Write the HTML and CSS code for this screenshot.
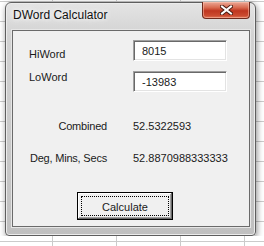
FILE: index.html
```html
<!DOCTYPE html>
<html lang="en">
<head>
  <meta charset="UTF-8">
  <meta name="viewport" content="width=device-width, initial-scale=1.0">
  <title>DWord Calculator</title>
  <link rel="stylesheet" href="styles.css">
</head>
<body>
  <div class="window">
    <div class="titlebar">
      <span class="title">DWord Calculator</span>
      <div class="close">
        <svg width="13" height="10" viewBox="0 0 13 10">
          <path d="M2 1.5 L11 8.5 M11 1.5 L2 8.5" stroke="#4b1c12" stroke-width="4" stroke-linecap="square" fill="none"/>
          <path d="M2 1.5 L11 8.5 M11 1.5 L2 8.5" stroke="#ffffff" stroke-width="2" stroke-linecap="square" fill="none"/>
        </svg>
      </div>
    </div>

    <div class="client">
      <div class="fields">
        <label class="label label-hi" for="hiword">HiWord</label>
        <input class="textbox" type="text" id="hiword" value="8015">
        <label class="label label-lo" for="loword">LoWord</label>
        <input class="textbox" type="text" id="loword" value="-13983">
      </div>

      <div class="results">
        <span class="result-label">Combined</span>
        <span class="result-value" id="combined">52.5322593</span>
        <span class="result-label">Deg, Mins, Secs</span>
        <span class="result-value" id="dms">52.8870988333333</span>
      </div>

      <button class="calc-button"><span class="focus">Calculate</span></button>
    </div>
  </div>
</body>
</html>
```

FILE: styles.css
```css
/* 기본 설정 */
:root {
  --client-bg: #f0f0f0;
  --text-color: #1a1a1a;
  --grid-line: #cbcbcb;
}

html {
  background-color: #fff;
  background-image:
    linear-gradient(to right, var(--grid-line) 1px, transparent 1px),
    linear-gradient(to bottom, var(--grid-line) 1px, transparent 1px);
  background-size: 64px 20px;
  background-position: 52px 1px;
}

body {
  margin: 0;
  padding: 2px 0 0 5px;
  font-family: "Liberation Sans", Arial, sans-serif;
  font-size: 11px;
  color: var(--text-color);
}

/* 창 프레임 */
.window {
  box-sizing: border-box;
  width: 251px;
  height: 234px;
  border: 1px solid #5e5e5e;
  border-radius: 6px 6px 4px 4px;
  background: linear-gradient(#e4e4e4, #d3d3d3 14%, #c9c9c9 60%, #c0c0c0);
  box-shadow: inset 0 0 0 1px #ececec, 1px 2px 6px rgba(0, 0, 0, 0.45);
  display: flex;
  flex-direction: column;
}

.titlebar {
  height: 27px;
  display: flex;
  justify-content: space-between;
  align-items: flex-start;
  padding: 0 5px 0 7px;
}

.title {
  font-size: 12px;
  line-height: 24px;
  color: #111;
  text-shadow: 0 0 8px #fff, 0 0 4px #fff;
}

/* 닫기 버튼 */
.close {
  box-sizing: border-box;
  width: 48px;
  height: 17px;
  margin-top: -1px;
  border: 1px solid #6f2a1d;
  border-top: none;
  border-radius: 0 0 4px 4px;
  background: linear-gradient(#eba897, #d96a50 35%, #bf3620 55%, #cb4b30 85%, #e0765a);
  box-shadow: inset 0 0 0 1px rgba(255, 200, 180, 0.5);
  display: flex;
  align-items: center;
  justify-content: center;
}

/* 클라이언트 영역 */
.client {
  box-sizing: border-box;
  height: 197px;
  margin: 0 5px 0 6px;
  padding: 9px 0 0 16px;
  background: var(--client-bg);
  border: 1px solid #6a6a6a;
  box-shadow: 0 0 0 1px #e6e6e6;
}

.fields,
.results {
  display: grid;
  column-gap: 26px;
}

.fields {
  grid-template-columns: 78px 94px;
  grid-auto-rows: 21px;
  row-gap: 10px;
}

.label {
  line-height: 13px;
}

.label-hi {
  padding-top: 8px;
}

.label-lo {
  padding-top: 0;
}

.textbox {
  box-sizing: border-box;
  width: 94px;
  height: 21px;
  margin: 0;
  padding: 0 0 0 8px;
  border: 1px solid;
  border-color: #a0a0a0 #ffffff #ffffff #a0a0a0;
  box-shadow: inset 1px 1px 0 #696969, inset -1px -1px 0 #e3e3e3;
  background: #fff;
  font-family: inherit;
  font-size: 11px;
  color: var(--text-color);
  outline: none;
}

.results {
  grid-template-columns: 84px 94px;
  margin: 28px 0 0 -6px;
  grid-auto-rows: 13px;
  row-gap: 19px;
  line-height: 13px;
}

.result-label {
  text-align: right;
  white-space: nowrap;
  letter-spacing: -0.2px;
}

/* 계산 버튼 */
.calc-button {
  box-sizing: border-box;
  width: 96px;
  height: 28px;
  margin: 27px 0 0 48px;
  padding: 0;
  border: 1px solid #000;
  background: var(--client-bg);
  box-shadow: inset -1px -1px 0 #696969, inset 1px 1px 0 #fff, inset -2px -2px 0 #a0a0a0;
  font-family: inherit;
  font-size: 11px;
  color: var(--text-color);
  display: flex;
  cursor: pointer;
}

.focus {
  flex: 1;
  margin: 3px;
  border: 1px dotted #000;
  display: flex;
  align-items: center;
  justify-content: center;
  padding-top: 2px;
}
```
